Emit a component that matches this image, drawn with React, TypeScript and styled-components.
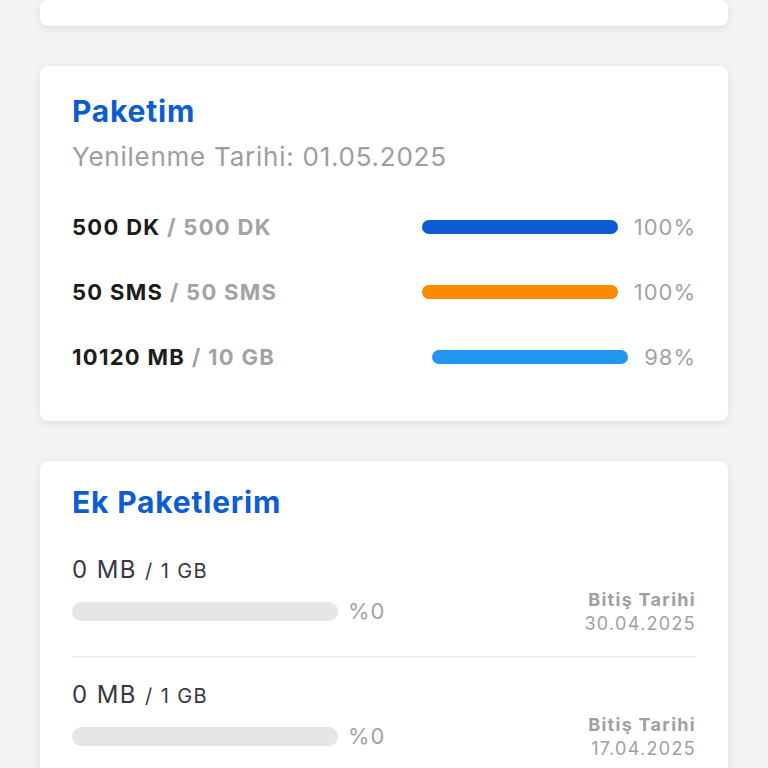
import React from "react";
import styled, { createGlobalStyle } from "styled-components";

const Global = createGlobalStyle`
  html, body { margin: 0; padding: 0; background: #f3f3f3; }
  body { font-family: Inter, "Noto Sans", sans-serif; -webkit-font-smoothing: antialiased; }
`;

const Page = styled.div`
  display: flex;
  flex-direction: column;
  gap: 40px;
  padding: 0 40px;
`;

const Card = styled.section<{ $h?: number }>`
  background: #fff;
  border-radius: 8px;
  box-shadow: 0 2px 8px rgba(0, 0, 0, 0.09);
  ${(p) => (p.$h ? `height: ${p.$h}px;` : "")}
  box-sizing: border-box;
`;

const PackCard = styled(Card)`
  padding: 26px 32px 0;
  height: 355px;
`;

const ExtraCard = styled(Card)`
  padding: 22px 32px 40px;
`;

const Title = styled.h2<{ $mb?: number }>`
  margin: 0 0 ${(p) => p.$mb ?? 0}px;
  font-size: 30px;
  line-height: 38px;
  font-weight: 700;
  letter-spacing: 0.8px;
  color: #0c5dd4;
`;

const Sub = styled.div`
  margin-top: 11px;
  font-size: 26px;
  line-height: 32px;
  letter-spacing: 0.75px;
  color: #9d9d9d;
`;

const Rows = styled.div`
  margin-top: 40px;
  display: flex;
  flex-direction: column;
  gap: 37px;
`;

const UsageRow = styled.div`
  display: flex;
  align-items: center;
  height: 28px;
`;

const UsageLabel = styled.div`
  flex: 1;
  font-size: 22px;
  font-weight: 700;
  letter-spacing: 1.3px;
  color: #1c1c1c;
  span { color: #a3a3a3; }
`;

const Bar = styled.div<{ $c: string }>`
  width: 196px;
  height: 14px;
  border-radius: 7px;
  background: ${(p) => p.$c};
`;

const Pct = styled.div`
  margin-left: 16px;
  font-size: 22px;
  letter-spacing: 1px;
  color: #a3a3a3;
  text-align: right;
`;

const Item = styled.div<{ $border?: boolean }>`
  display: flex;
  align-items: flex-end;
  padding: 22px 0 20px;
  ${(p) => (p.$border ? "border-bottom: 2px solid #efefef;" : "")}
`;

const ItemLeft = styled.div`
  flex: 1;
  display: flex;
  flex-direction: column;
  gap: 12px;
  padding-bottom: 12px;
`;

const Amount = styled.div`
  font-size: 24px;
  line-height: 30px;
  letter-spacing: 1.4px;
  color: #383844;
  small { font-size: 20px; letter-spacing: 1.4px; }
`;

const TrackRow = styled.div`
  display: flex;
  align-items: center;
  gap: 10px;
`;

const Track = styled.div`
  width: 266px;
  height: 19px;
  border-radius: 10px;
  background: #e6e6e6;
`;

const Zero = styled.div`
  font-size: 22px;
  letter-spacing: 1px;
  color: #a3a3a3;
`;

const EndInfo = styled.div`
  text-align: right;
  font-size: 18px;
  line-height: 24px;
  letter-spacing: 1.3px;
  color: #a0a0a0;
  b { font-weight: 700; display: block; }
`;

const usage = [
  { a: "500 DK", b: "500 DK", c: "#0b5bd3", p: "100%" },
  { a: "50 SMS", b: "50 SMS", c: "#fb8a00", p: "100%" },
  { a: "10120 MB", b: "10 GB", c: "#2196f0", p: "98%" },
];

const extras = [{ d: "30.04.2025" }, { d: "17.04.2025" }];

export default function App() {
  return (
    <>
      <Global />
      <Page>
        <Card $h={26} />
        <PackCard>
          <Title>Paketim</Title>
          <Sub>Yenilenme Tarihi: 01.05.2025</Sub>
          <Rows>
            {usage.map((u) => (
              <UsageRow key={u.a}>
                <UsageLabel>
                  {u.a} <span>/ {u.b}</span>
                </UsageLabel>
                <Bar $c={u.c} />
                <Pct>{u.p}</Pct>
              </UsageRow>
            ))}
          </Rows>
        </PackCard>
        <ExtraCard>
          <Title $mb={12}>Ek Paketlerim</Title>
          {extras.map((e, i) => (
            <Item key={e.d} $border={i === 0}>
              <ItemLeft>
                <Amount>
                  0 MB <small>/ 1 GB</small>
                </Amount>
                <TrackRow>
                  <Track />
                  <Zero>%0</Zero>
                </TrackRow>
              </ItemLeft>
              <EndInfo>
                <b>Bitiş Tarihi</b>
                {e.d}
              </EndInfo>
            </Item>
          ))}
        </ExtraCard>
      </Page>
    </>
  );
}
